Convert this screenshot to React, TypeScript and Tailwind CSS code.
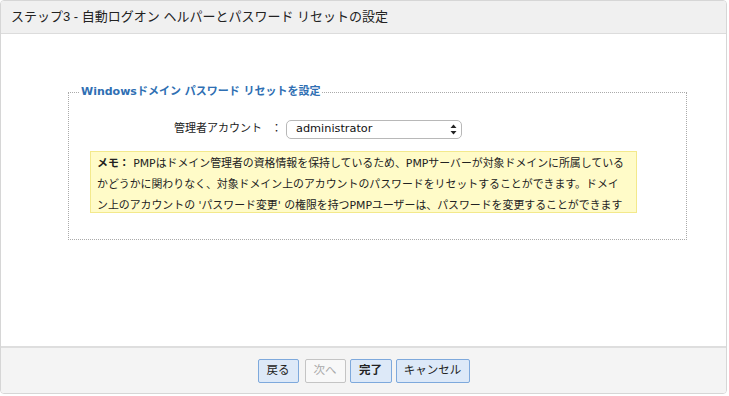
const App = () => {
  const font = {
    fontFamily: '"DejaVu Sans", "Noto Sans CJK JP", sans-serif',
  };

  return (
    <div className="w-[729px] h-[396px] bg-white" style={font}>
      <div className="w-[727px] h-[394px] flex flex-col border border-[#d6d6d6] rounded-[4px] overflow-hidden">
        {/* Header */}
        <div className="h-[33px] shrink-0 flex items-center px-[10px] bg-[#f0f0f0] border-b border-[#dcdcdc]">
          <span
            className="text-[13px] text-[#222]"
            style={{ fontFamily: '"Liberation Sans", "Noto Sans CJK JP", sans-serif' }}
          >
            ステップ3 - 自動ログオン ヘルパーとパスワード リセットの設定
          </span>
        </div>

        {/* Body */}
        <div className="flex-1 bg-white pt-[50px] pl-[67px] pr-[40px]">
          <fieldset className="w-[619px] h-[156px] border border-dotted border-[#aaa] px-[21px] pt-[18px]">
            <legend className="ml-[-10px] px-[1px] text-[11px] font-bold text-[#2f6fb3]">
              Windowsドメイン パスワード リセットを設定
            </legend>
            <div className="flex items-center h-[20px] mt-[1px]">
              <div className="w-[196px] pr-[4px] flex justify-end text-[11px] text-[#222]">
                <span>管理者アカウント</span>
                <span className="ml-[9px]">：</span>
              </div>
              <div className="w-[176px] h-[19px] flex items-center justify-between rounded-[5px] border border-[#b8b8b8] bg-white pl-[9px] pr-[4px] text-[11.3px] text-[#111]">
                <span>administrator</span>
                <svg width="7" height="11" viewBox="0 0 7 11">
                  <path d="M3.5 0.5 L6.5 4 L0.5 4 Z" fill="#222" />
                  <path d="M3.5 10.5 L6.5 7 L0.5 7 Z" fill="#222" />
                </svg>
              </div>
            </div>
            <div className="mt-[11px] w-[547px] h-[62px] bg-[#fffbc8] border border-[#f3e98c] px-[6px] pt-[1px] text-[10.9px] leading-[21px] text-[#222] whitespace-nowrap">
              <div>
                <span className="font-bold">メモ：</span> PMPはドメイン管理者の資格情報を保持しているため、PMPサーバーが対象ドメインに所属している
              </div>
              <div>
                かどうかに関わりなく、対象ドメイン上のアカウントのパスワードをリセットすることができます。ドメイ
              </div>
              <div>
                ン上のアカウントの 'パスワード変更' の権限を持つPMPユーザーは、パスワードを変更することができます
              </div>
            </div>
          </fieldset>
        </div>

        {/* Footer */}
        <div className="h-[47px] shrink-0 flex items-center justify-center bg-[#f4f4f4] border-t-2 border-[#dedede]">
          <button className="w-[41px] h-[24px] rounded-[2px] border border-[#7ea9dc] bg-[#dde9f8] text-[11.5px] text-[#222]">
            戻る
          </button>
          <button className="ml-[6px] w-[41px] h-[24px] rounded-[2px] border border-[#c4c4c4] bg-[#f8f8f8] text-[11.5px] text-[#aaa]">
            次へ
          </button>
          <button className="ml-[4px] w-[42px] h-[24px] rounded-[2px] border border-[#7ea9dc] bg-[#dde9f8] text-[11.5px] font-bold text-[#222]">
            完了
          </button>
          <button className="ml-[4px] w-[74px] h-[24px] rounded-[2px] border border-[#7ea9dc] bg-[#dde9f8] text-[11.5px] text-[#222]">
            キャンセル
          </button>
        </div>
      </div>
    </div>
  );
};

export default App;
